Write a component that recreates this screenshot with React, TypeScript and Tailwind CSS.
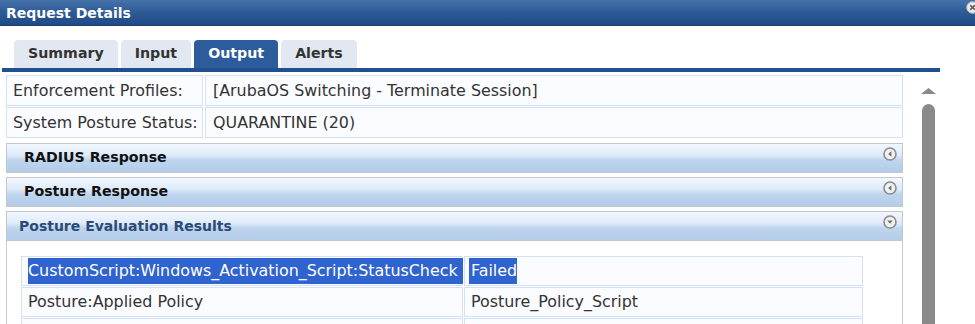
const font = "font-['DejaVu_Sans',Verdana,sans-serif]";

function CircleIcon({ open }: { open?: boolean }) {
  return (
    <svg width="14" height="14" viewBox="0 0 14 14">
      <circle cx="7" cy="7" r="6" fill="#f1f1f1" stroke="#8c8c8c" strokeWidth="1.6" />
      {open ? (
        <path d="M4.3 5.6 L9.7 5.6 L7 8.8 Z" fill="#6e6e6e" />
      ) : (
        <path d="M8.4 4.3 L8.4 9.7 L5.2 7 Z" fill="#6e6e6e" />
      )}
    </svg>
  );
}

function SectionHeader({
  title,
  open,
  className
}: {
  title: string;
  open?: boolean;
  className?: string;
}) {
  return (
    <div
      className={`flex items-center justify-between h-[30px] border border-[#c4c7cd] bg-[linear-gradient(to_bottom,#f1f7fe_0%,#dfebf9_40%,#bed5ee_58%,#b3cce8_100%)] pr-[5px] ${className ?? ''}`}
    >
      <span
        className={`font-bold ${open ? 'text-[14px] pl-[12px] text-[#2c4a78]' : 'text-[14.2px] pl-[17px] text-[#111]'}`}
      >
        {title}
      </span>
      <span className="-mt-[8px]">
        <CircleIcon open={open} />
      </span>
    </div>
  );
}

const tabs = ['Summary', 'Input', 'Output', 'Alerts'];

export default function App() {
  return (
    <div className={`relative h-[324px] w-[975px] overflow-hidden bg-white ${font}`}>
      {/* title bar */}
      <div className="h-[26px] flex items-center pl-[6px] bg-[linear-gradient(to_bottom,#4772aa_0%,#2f5c98_45%,#1f4a86_100%)] border-b border-[#183d70]">
        <span className="text-white font-bold text-[14px] leading-none">Request Details</span>
      </div>
      <div className="absolute -right-[4px] top-[1px]">
        <svg width="13" height="13" viewBox="0 0 13 13">
          <circle cx="6.5" cy="6.5" r="5.8" fill="#e9e9e9" stroke="#b8b8b8" strokeWidth="1" />
          <path d="M4.2 4.2 L8.8 8.8 M8.8 4.2 L4.2 8.8" stroke="#5a5a5a" strokeWidth="1.6" />
        </svg>
      </div>

      {/* tabs */}
      <div className="flex gap-[3px] pl-[14px] pt-[14px]">
        {tabs.map((t) => (
          <div
            key={t}
            className={`h-[28px] px-[14px] flex items-center rounded-t-[4px] text-[14.2px] font-bold ${
              t === 'Output' ? 'bg-[#2c5c9b] text-white' : 'bg-[#e2e8f1] text-[#333]'
            }`}
          >
            {t}
          </div>
        ))}
      </div>
      <div className="ml-[2px] w-[938px] h-[4px] bg-[#21508f]" />

      <div className="flex">
        {/* main content */}
        <div className="ml-[6px] w-[897px] pt-[3px]">
          <div className="grid grid-cols-[197px_1fr] gap-x-[2px] gap-y-[1px] text-[15.9px] text-[#333]">
            <div className="h-[31px] flex items-center pl-[6px] border border-[#d3e1f7] bg-[#fbfcff]">
              Enforcement Profiles:
            </div>
            <div className="h-[31px] flex items-center pl-[7px] border border-[#d3e1f7] bg-[#fbfcff]">
              [ArubaOS Switching - Terminate Session]
            </div>
            <div className="h-[31px] flex items-center pl-[6px] border border-[#d3e1f7] bg-[#fbfcff]">
              System Posture Status:
            </div>
            <div className="h-[31px] flex items-center pl-[7px] border border-[#d3e1f7] bg-[#fbfcff]">
              QUARANTINE (20)
            </div>
          </div>

          <SectionHeader title="RADIUS Response" className="mt-[5px]" />
          <SectionHeader title="Posture Response" className="mt-[4px]" />
          <SectionHeader title="Posture Evaluation Results" open className="mt-[4px]" />

          <div className="border-x border-[#c8cacf] h-[120px] pt-[15px] pl-[14px]">
            <div className="w-[842px] grid grid-cols-[442px_1fr] gap-x-[1px] gap-y-[1px] text-[15.9px] text-[#333]">
              <div className="h-[30px] flex items-center pl-[6px] border border-[#d3e1f7] bg-[#fbfcff]">
                <span className="bg-[#2f63cf] text-white py-[1.5px] pr-[5px]">
                  CustomScript:Windows_Activation_Script:StatusCheck
                </span>
              </div>
              <div className="h-[30px] flex items-center pl-[4px] border border-[#d3e1f7] bg-[#fbfcff]">
                <span className="bg-[#2f63cf] text-white py-[1.5px] pl-[2px]">Failed</span>
              </div>
              <div className="h-[30px] flex items-center pl-[6px] border border-[#d3e1f7] bg-[#fbfcff]">
                Posture:Applied Policy
              </div>
              <div className="h-[30px] flex items-center pl-[6px] border border-[#d3e1f7] bg-[#fbfcff]">
                Posture_Policy_Script
              </div>
              <div className="h-[30px] border border-[#d3e1f7] bg-[#fbfcff]" />
              <div className="h-[30px] border border-[#d3e1f7] bg-[#fbfcff]" />
            </div>
          </div>
        </div>

        {/* scrollbar */}
        <div className="ml-[18px] w-[15px] flex flex-col items-center pt-[16px]">
          <svg width="15" height="6" viewBox="0 0 15 6">
            <path d="M0 6 L7.5 0 L15 6 Z" fill="#8a8a8a" />
          </svg>
          <div className="mt-[10px] w-[13px] h-[300px] rounded-t-full bg-[#8a8a8a]" />
        </div>
      </div>
    </div>
  );
}
